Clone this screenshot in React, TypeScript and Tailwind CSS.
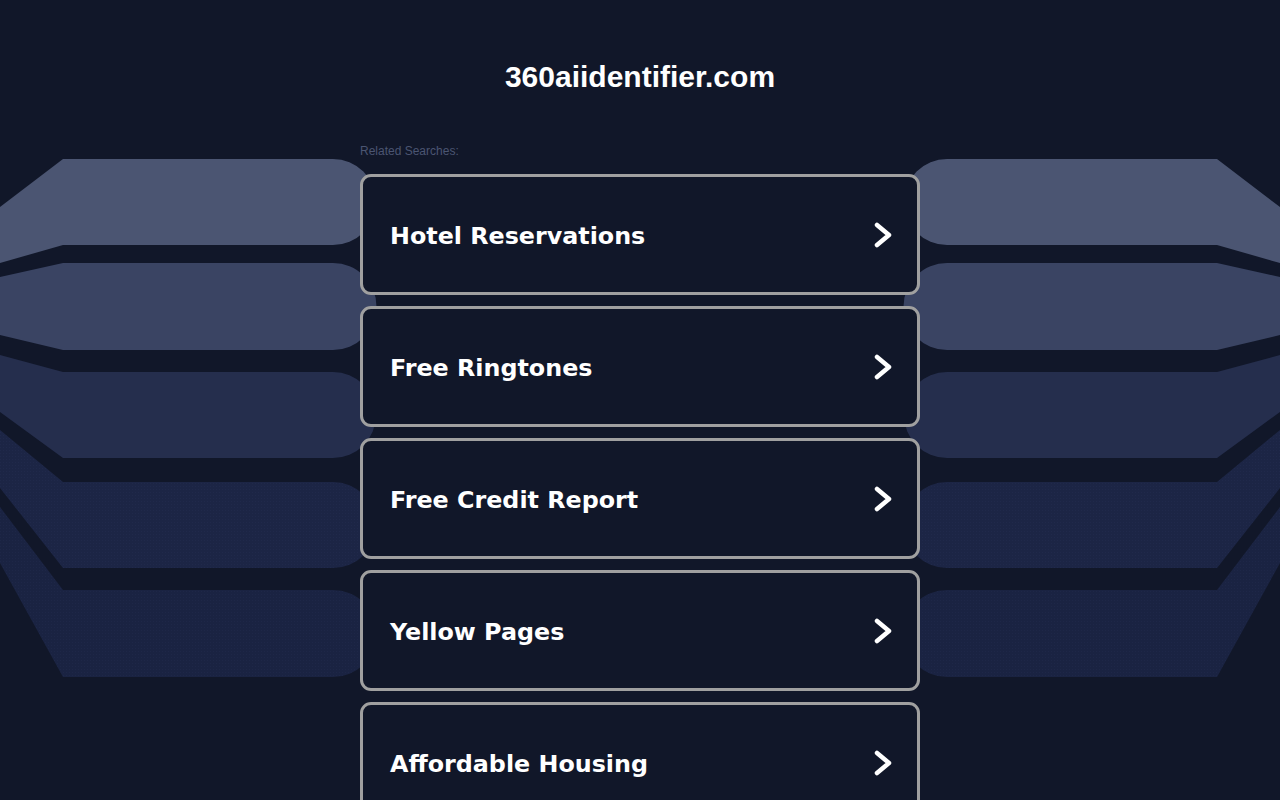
const searches = [
  "Hotel Reservations",
  "Free Ringtones",
  "Free Credit Report",
  "Yellow Pages",
  "Affordable Housing",
];

function SideBands() {
  const bands = (
    <>
      <path d="M0,207 L63,159 L333,159 A43,43 0 0 1 333,245 L63,245 L0,263 Z" fill="#4b5572" />
      <path d="M0,277 L63,263 L333,263 A43.5,43.5 0 0 1 333,350 L63,350 L0,335 Z" fill="#3a4463" />
      <path d="M0,355 L63,372 L333,372 A43,43 0 0 1 333,458 L63,458 L0,412 Z" fill="#252e4d" />
      <path d="M0,430 L63,482 L333,482 A43,43 0 0 1 333,568 L63,568 L0,488 Z" fill="url(#dots4)" />
      <path d="M0,507 L63,590 L333,590 A43.5,43.5 0 0 1 333,677 L63,677 L0,563 Z" fill="url(#dots5)" />
    </>
  );

  return (
    <svg
      className="pointer-events-none absolute inset-0"
      width="1280"
      height="800"
      viewBox="0 0 1280 800"
      aria-hidden="true"
    >
      <defs>
        <pattern id="dots4" width="3" height="3" patternUnits="userSpaceOnUse">
          <rect width="3" height="3" fill="#1c2545" />
          <rect width="1" height="1" fill="#20294b" />
        </pattern>
        <pattern id="dots5" width="3" height="3" patternUnits="userSpaceOnUse">
          <rect width="3" height="3" fill="#1a2342" />
          <rect width="1" height="1" fill="#1e2748" />
        </pattern>
      </defs>
      <g>{bands}</g>
      <g transform="translate(1280,0) scale(-1,1)">{bands}</g>
    </svg>
  );
}

function Chevron() {
  return (
    <svg width="18" height="26" viewBox="0 0 18 26" aria-hidden="true">
      <path
        d="M3,3 L15,13 L3,23"
        fill="none"
        stroke="white"
        strokeWidth="4.5"
        strokeLinecap="round"
        strokeLinejoin="round"
      />
    </svg>
  );
}

export default function App() {
  return (
    <div className="relative h-[800px] w-full overflow-hidden bg-[#111729]">
      <SideBands />
      <div className="relative z-10 mx-auto flex w-[560px] flex-col">
        <h1 className="mt-[59px] text-center font-['Liberation_Sans',Arial,sans-serif] text-[30px] font-bold leading-[36px] text-white">
          360aiidentifier.com
        </h1>
        <p className="mt-[49px] mb-[16px] font-['Liberation_Sans',Arial,sans-serif] text-[12px] leading-[14px] text-[#4b5572]">
          Related Searches:
        </p>
        <div className="flex flex-col gap-[11px]">
          {searches.map((item) => (
            <a
              key={item}
              href="#"
              className="flex h-[121px] items-center justify-between rounded-[11px] border-[3px] border-[#a0a0a0] bg-[#111729] pl-[27px] pr-[25px]"
            >
              <span className="mt-[4px] font-['DejaVu_Sans',Verdana,sans-serif] text-[23.8px] font-bold text-white">
                {item}
              </span>
              <Chevron />
            </a>
          ))}
        </div>
      </div>
    </div>
  );
}
